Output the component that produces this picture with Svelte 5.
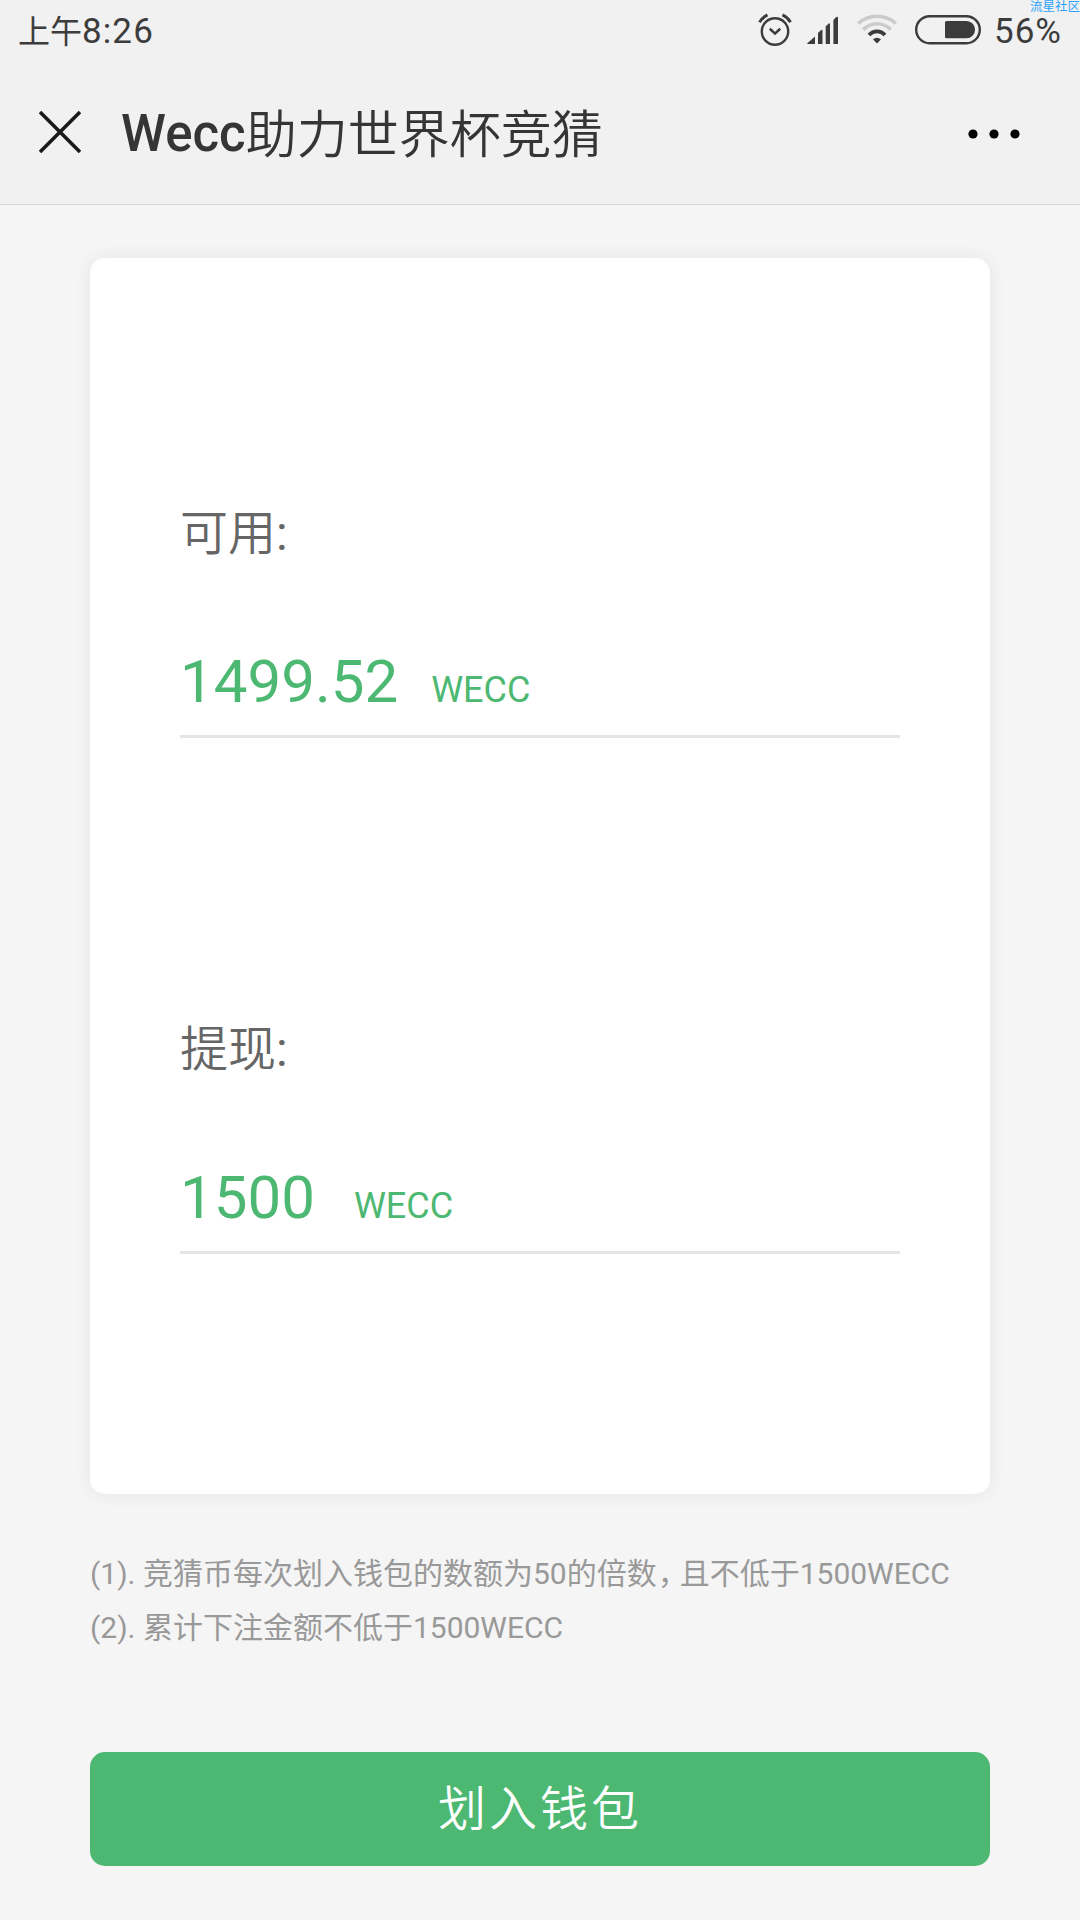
<script>
  let time = '8:26';
  let battery = 56;

  const fields = [
    { name: 'available', label: '可用', value: '1499.52' },
    { name: 'withdraw', label: '提现', value: '1500' }
  ];

  const notes = [
    { text: '竞猜币每次划入钱包的数额为50的倍数', tail: '且不低于1500WECC' },
    { text: '累计下注金额不低于1500WECC', tail: '' }
  ];
</script>

<div class="page">
  <header>
    <div class="status-bar">
      <div class="time"><span>上午</span>{time}</div>
      <div class="status-icons">
        <!-- alarm -->
        <svg class="alarm" width="34" height="34" viewBox="0 0 34 34" fill="none" stroke="#3c3c3c">
          <circle cx="17" cy="18.5" r="13.2" stroke-width="2.4" />
          <path d="M11.8 15.8L17 20.6L22.2 15.8" stroke-width="2.6" />
          <path d="M1.5 9.2Q4.5 4.2 9.5 1.9M24.5 1.9Q29.5 4.2 32.5 9.2" stroke-width="3" />
        </svg>
        <!-- signal -->
        <svg class="signal" width="32" height="28" viewBox="0 0 32 28" fill="#3c3c3c">
          <path d="M0 27.4L8 20.4V28H0.6Z" />
          <path d="M11 17L13.8 14.2Q15.5 13 15.5 15V28H11Z" />
          <path d="M18.7 10.5L21.4 7.8Q23 6.5 23 8.5V28H18.7Z" />
          <path d="M26.4 4L29.3 1Q31 0 31 1.8V28H26.4Z" />
        </svg>
        <!-- wifi -->
        <svg class="wifi" width="40" height="30" viewBox="0 0 40 30" fill="none">
          <path d="M1.2 9.5Q9 2.2 20 2.2Q31 2.2 38.8 9.5" stroke="#cbcbcb" stroke-width="3.6" />
          <path d="M6.3 15.8Q12 9.8 20 9.8Q28 9.8 33.7 15.8" stroke="#cbcbcb" stroke-width="3.6" />
          <path d="M12 21Q15.3 17.3 20 17.3Q24.7 17.3 28 21" stroke="#3c3c3c" stroke-width="3.8" />
          <path d="M16 25.3Q20 22 24 25.3L20.8 28.8Q20 29.6 19.2 28.8Z" fill="#3c3c3c" />
        </svg>
        <!-- battery -->
        <svg class="battery" width="66" height="30" viewBox="0 0 66 30">
          <rect x="1.2" y="1.2" width="63.6" height="27" rx="13.5" fill="none" stroke="#3c3c3c" stroke-width="2.4" />
          <path d="M31.5 6H51.5A8.6 8.6 0 0 1 51.5 23.2H31.5Q30 23.2 30 21.7V7.5Q30 6 31.5 6Z" fill="#3c3c3c" />
        </svg>
        <span class="percent">{battery}%</span>
      </div>
      <span class="watermark">流星社区</span>
    </div>

    <div class="nav">
      <svg class="close" width="42" height="42" viewBox="0 0 42 42" stroke="#1a1a1a" stroke-width="3.6">
        <path d="M1 1L41 41M41 1L1 41" />
      </svg>
      <h1><b>Wecc</b><span>助力世界杯竞猜</span></h1>
      <svg class="more" width="52" height="10" viewBox="0 0 52 10" fill="#000">
        <circle cx="5" cy="5" r="4.6" />
        <circle cx="26" cy="5" r="4.6" />
        <circle cx="47" cy="5" r="4.6" />
      </svg>
    </div>
  </header>

  <main>
    <section class="card">
      {#each fields as field}
        <div class="field">
          <div class="label">{field.label}<span>:</span></div>
          <div class="amount {field.name}">
            <span class="value">{field.value}</span>
            <span class="unit">WECC</span>
          </div>
        </div>
      {/each}
    </section>

    <div class="notes">
      {#each notes as note, i}
        <p>({i + 1}). {note.text}{#if note.tail}<span class="comma">，</span>{note.tail}{/if}</p>
      {/each}
    </div>

    <button>划入钱包</button>
  </main>
</div>

<style>
  :global(body) {
    margin: 0;
    background: #f5f5f5;
  }

  .page {
    width: 1080px;
    height: 1920px;
    overflow: hidden;
    background: #f5f5f5;
    font-family: Roboto, 'Noto Sans CJK SC', sans-serif;
  }

  header {
    box-sizing: border-box;
    height: 205px;
    background: #f1f1f1;
    border-bottom: 1px solid #d9d9d9;
  }

  .status-bar {
    position: relative;
    display: flex;
    justify-content: space-between;
    box-sizing: border-box;
    height: 60px;
    padding: 0 18px;
    color: #3c3c3c;
    font-size: 35px;
    line-height: 63px;
  }

  .time {
    letter-spacing: 1.1px;
  }

  .time span {
    font-size: 32px;
    letter-spacing: 0;
  }

  .status-icons {
    display: flex;
    align-items: flex-start;
  }

  .alarm {
    margin: 13px 15px 0 0;
  }

  .signal {
    margin: 16px 18px 0 0;
  }

  .wifi {
    margin: 14px 18px 0 0;
  }

  .battery {
    margin: 15px 13px 0 0;
  }

  .percent {
    letter-spacing: 1px;
  }

  .watermark {
    position: absolute;
    top: 0;
    right: 0;
    color: #2ba2fb;
    font-size: 12.5px;
    line-height: 14px;
  }

  .nav {
    display: flex;
    align-items: center;
    height: 147px;
    padding: 0 60px 0 39px;
  }

  .close {
    margin-bottom: 3px;
  }

  h1 {
    flex: 1;
    margin: 3px 0 0 40px;
    color: #353535;
    font-size: 51px;
    font-weight: 400;
    line-height: 60px;
  }

  h1 b {
    font-weight: 500;
  }

  h1 span {
    font-weight: 350;
    vertical-align: -2px;
  }

  main {
    padding: 53px 90px 0;
  }

  .card {
    box-sizing: border-box;
    height: 1236px;
    padding: 222px 90px 0;
    border-radius: 15px;
    background: #fff;
    box-shadow: 0 0 18px rgba(0, 0, 0, 0.07);
  }

  .field {
    box-sizing: border-box;
    height: 258px;
    margin-bottom: 258px;
    border-bottom: 3px solid #e5e5e5;
  }

  .label {
    height: 105px;
    color: #666;
    font-size: 48px;
    font-weight: 350;
    line-height: 108px;
  }

  .label span {
    font-weight: 400;
  }

  .amount {
    display: flex;
    align-items: baseline;
    padding-top: 61px;
    color: #4cb872;
    line-height: 72px;
  }

  .value {
    font-size: 60px;
  }

  .unit {
    margin-left: 33px;
    font-size: 36px;
  }

  .withdraw .unit {
    margin-left: 39px;
  }

  .notes {
    height: 258px;
    padding-top: 53px;
    box-sizing: border-box;
    color: #999;
    font-size: 30px;
    line-height: 54px;
  }

  .notes p {
    margin: 0;
    white-space: nowrap;
  }

  /* half-width comma */
  .comma {
    font-feature-settings: 'halt';
    padding: 0 7px 0 1px;
  }

  button {
    display: block;
    width: 900px;
    height: 114px;
    padding: 0 0 8px;
    border: none;
    border-radius: 15px;
    background: #4cb872;
    color: #fff;
    font-family: inherit;
    font-size: 48px;
    font-weight: 350;
    letter-spacing: 3px;
  }
</style>
